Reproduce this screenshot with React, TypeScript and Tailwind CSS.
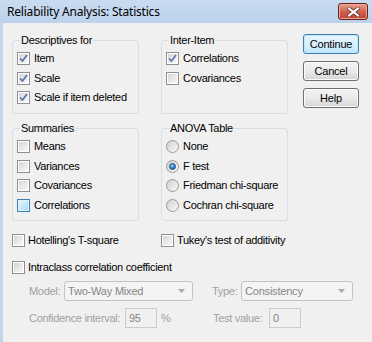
import React from 'react';

const FONT = "font-['Liberation_Sans',Arial,sans-serif]";

interface CheckProps {
    label: string;
    checked?: boolean;
    hot?: boolean;
    gap?: string;
}

// Win7 style checkbox
const Check: React.FC<CheckProps> = ({ label, checked, hot, gap = 'gap-[4px]' }) => (
    <div className={`flex h-[19.5px] items-center ${gap}`}>
        <span
            className={`flex h-[13px] w-[13px] shrink-0 border p-[1px] ${hot ? 'border-[#3c7fb1] bg-[#e3f4fc]' : 'border-[#8f8f8f] bg-white'}`}
        >
            <span
                className={`relative block h-full w-full ${hot ? 'bg-linear-to-br from-[#e6f6fe] to-[#aad9f8]' : 'bg-linear-to-br from-[#d6d6d6] to-[#f9f9f9]'}`}
            >
                {checked && (
                    <svg width="9" height="9" viewBox="0 0 9 9" className="absolute left-0 top-0">
                        <path d="M1 4.5 L3.5 7 L8 1" fill="none" stroke="#5873ad" strokeWidth="1.7" />
                    </svg>
                )}
            </span>
        </span>
        <span className="text-[11px] leading-[13px] tracking-[-0.3px] text-black">{label}</span>
    </div>
);

// Win7 style radio
const Radio: React.FC<{ label: string; checked?: boolean }> = ({ label, checked }) => (
    <div className="flex h-[19.5px] items-center gap-[4px]">
        <span className="flex h-[13px] w-[13px] shrink-0 items-center justify-center rounded-full border border-[#9a9a9a] bg-linear-to-br from-[#cfcfcf] to-[#fbfbfb]">
            {checked && (
                <span className="h-[7px] w-[7px] rounded-full border border-[#1c4f80] bg-[radial-gradient(circle_at_40%_35%,#9fdcff,#1f74c0_60%,#0d4f8f)]" />
            )}
        </span>
        <span className="text-[11px] leading-[13px] tracking-[-0.3px] text-black">{label}</span>
    </div>
);

const Group: React.FC<{ title: string; height: string; children: React.ReactNode }> = ({ title, height, children }) => (
    <div className={`relative w-[127px] ${height} rounded-[3px] border border-[#d5dfe5]`}>
        <span className="absolute left-[7px] top-[-7px] bg-[#f0f0f0] px-[1px] text-[11px] leading-[13px] tracking-[-0.3px] text-black">
            {title}
        </span>
        <div className="flex flex-col pl-[4px] pt-[8px]">{children}</div>
    </div>
);

const Button: React.FC<{ label: string; primary?: boolean }> = ({ label, primary }) => (
    <div
        className={`flex h-[20px] w-[56px] items-center justify-center rounded-[3px] border text-[11px] tracking-[-0.2px] text-black ${primary
            ? 'border-[#3c7fb1] bg-linear-to-b from-[#eaf6fd] via-[#d9f0fc] to-[#bee6fd] shadow-[inset_0_0_0_1px_#c2e7fb]'
            : 'border-[#707070] bg-linear-to-b from-[#f2f2f2] via-[#ebebeb] to-[#d4d4d4] shadow-[inset_0_0_0_1px_#fbfbfb]'
            }`}
    >
        {label}
    </div>
);

const Arrow = () => (
    <svg width="7" height="4" viewBox="0 0 7 4">
        <path d="M0 0 H7 L3.5 4 Z" fill="#a8a8a8" />
    </svg>
);

const Select: React.FC<{ value: string; width: string }> = ({ value, width }) => (
    <div className={`flex h-[20px] ${width} items-center justify-between rounded-[3px] border border-[#c3c3c3] bg-[#f4f4f4] pl-[3px] pr-[7px]`}>
        <span className="text-[11px] tracking-[-0.2px] text-[#868686]">{value}</span>
        <Arrow />
    </div>
);

const Input: React.FC<{ value: string }> = ({ value }) => (
    <div className="flex h-[20px] w-[32px] items-center border border-[#c8ccd0] bg-[#f0f0f0] pl-[3px] text-[11px] text-[#868686]">
        {value}
    </div>
);

export default function App() {
    return (
        <div className={`flex h-[342px] w-[372px] flex-col overflow-hidden bg-[#c2d6ee] ${FONT}`}>
            {/* title bar */}
            <div className="flex h-[23px] shrink-0 items-center justify-between bg-linear-to-b from-[#c9dbf0] to-[#bcd2eb] pl-[7px] pr-[4px]">
                <span className="font-['Noto_Sans',sans-serif] text-[12px] leading-[16px] tracking-[-0.2px] text-black">
                    Reliability Analysis: Statistics
                </span>
                <div className="flex h-[17px] w-[30px] items-center justify-center rounded-[3px] border border-[#6a1f1a] bg-linear-to-b from-[#e8a495] via-[#d2614f] to-[#c2412f] shadow-[inset_0_0_0_1px_#eba89c]">
                    <svg width="13" height="10" viewBox="0 0 13 10">
                        <path d="M2 1.5 L11 8.5 M11 1.5 L2 8.5" stroke="#6a3a35" strokeWidth="3.6" strokeLinecap="square" />
                        <path d="M2 1.5 L11 8.5 M11 1.5 L2 8.5" stroke="#ffffff" strokeWidth="2" strokeLinecap="square" />
                    </svg>
                </div>
            </div>

            {/* client area */}
            <div className="ml-[3px] flex flex-1 flex-col bg-[#f0f0f0] pl-[9px]">
                <div className="mt-[11px] flex items-start">
                    <div className="mt-[6px]">
                        <Group title="Descriptives for" height="h-[74px]">
                            <Check label="Item" checked />
                            <Check label="Scale" checked />
                            <Check label="Scale if item deleted" checked />
                        </Group>
                    </div>
                    <div className="ml-[22px] mt-[6px]">
                        <Group title="Inter-Item" height="h-[74px]">
                            <Check label="Correlations" checked />
                            <Check label="Covariances" />
                        </Group>
                    </div>
                    <div className="ml-[15px] flex flex-col gap-[7px]">
                        <Button label="Continue" primary />
                        <Button label="Cancel" />
                        <Button label="Help" />
                    </div>
                </div>

                <div className="mt-[14px] flex items-start gap-[22px]">
                    <Group title="Summaries" height="h-[93px]">
                        <Check label="Means" />
                        <Check label="Variances" />
                        <Check label="Covariances" />
                        <Check label="Correlations" hot />
                    </Group>
                    <Group title="ANOVA Table" height="h-[93px]">
                        <Radio label="None" />
                        <Radio label="F test" checked />
                        <Radio label="Friedman chi-square" />
                        <Radio label="Cochran chi-square" />
                    </Group>
                </div>

                <div className="mt-[9px] flex h-[20px] items-center">
                    <div className="w-[149px]">
                        <Check label="Hotelling's T-square" gap="gap-[3px]" />
                    </div>
                    <Check label="Tukey's test of additivity" gap="gap-[3px]" />
                </div>

                <div className="mt-[7px] flex h-[20px] items-center">
                    <Check label="Intraclass correlation coefficient" gap="gap-[3px]" />
                </div>

                <div className="mt-[4px] flex items-center pl-[17px] text-[11px] tracking-[-0.3px] text-[#a0a0a0]">
                    <div className="flex w-[183px] items-center">
                        <span className="w-[35px]">Model:</span>
                        <Select value="Two-Way Mixed" width="w-[129px]" />
                    </div>
                    <span className="w-[29px]">Type:</span>
                    <Select value="Consistency" width="w-[112px]" />
                </div>

                <div className="mt-[7px] flex items-center pl-[17px] text-[11px] tracking-[-0.3px] text-[#a0a0a0]">
                    <div className="flex w-[183px] items-center">
                        <span className="w-[96px]">Confidence interval:</span>
                        <Input value="95" />
                        <span className="ml-[4px]">%</span>
                    </div>
                    <span className="w-[57px] pl-[1px]">Test value:</span>
                    <Input value="0" />
                </div>
            </div>
        </div>
    );
}
